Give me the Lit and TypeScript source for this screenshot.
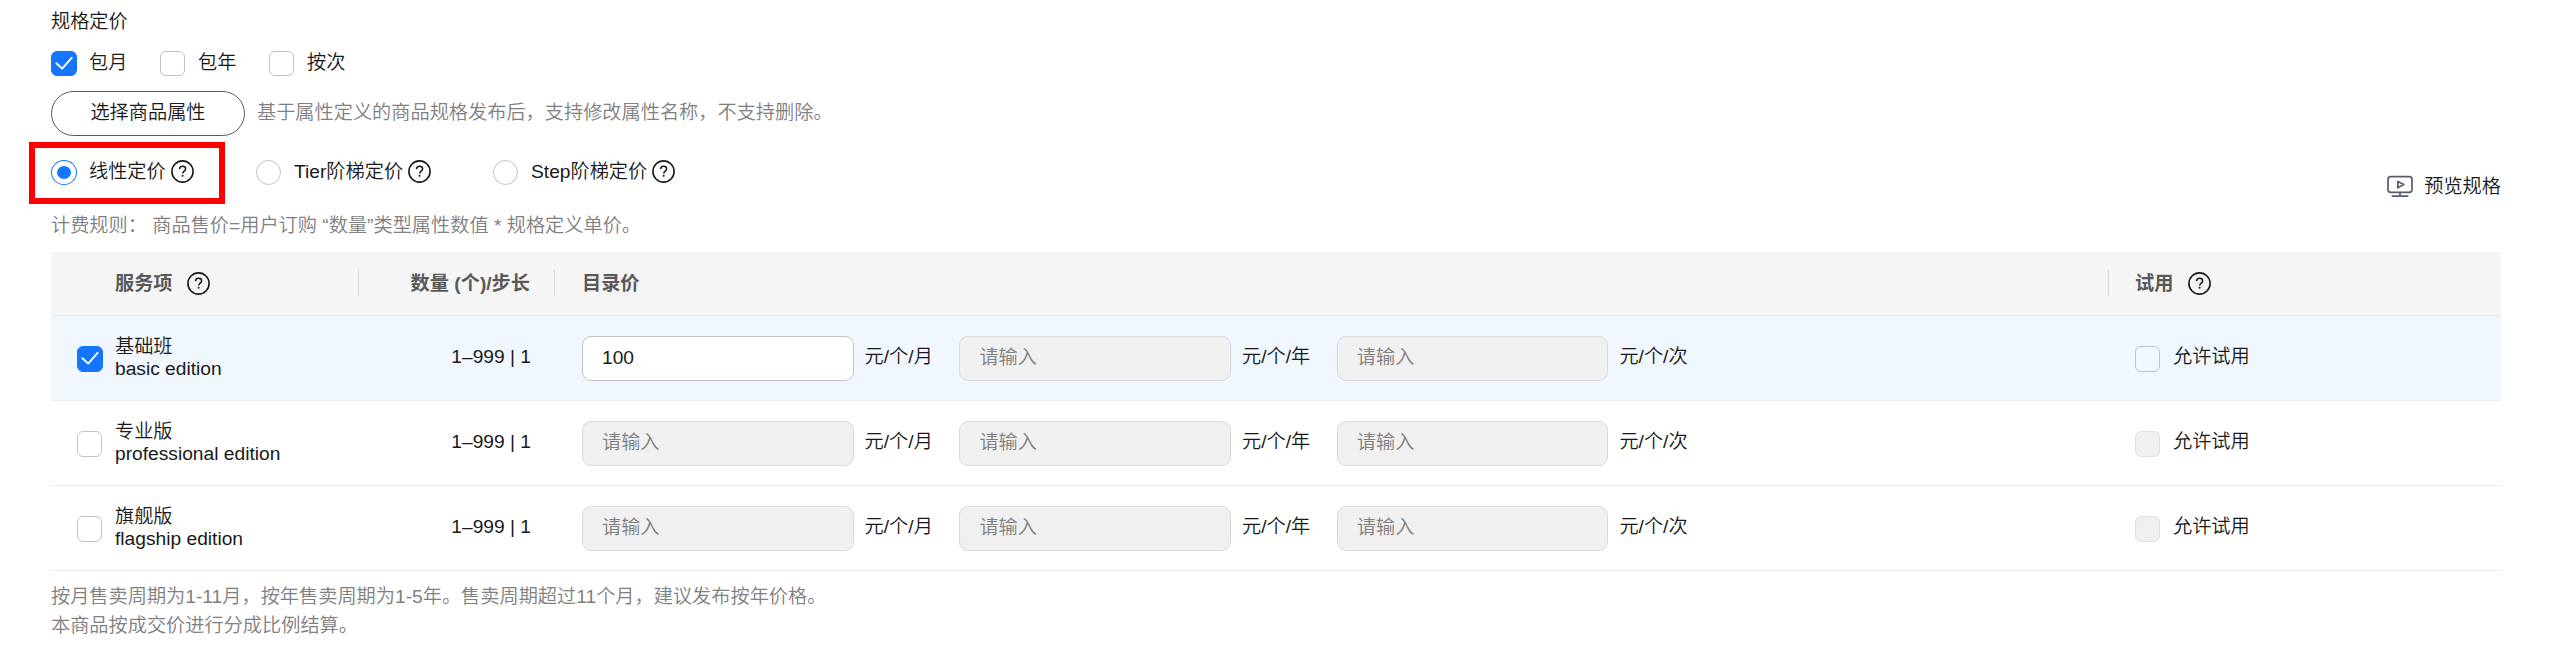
import { LitElement, html, css, nothing } from "lit";
import { customElement, property } from "lit/decorators.js";
import { classMap } from "lit/directives/class-map.js";

@customElement("help-icon")
class HelpIcon extends LitElement {
  static styles = css`
    :host { display: block; flex: none; width: 23px; height: 23px; }
    .glyph { display: block; }
  `;
  render() {
    return html`<svg class="glyph" width="23" height="23" viewBox="0 0 23 23" fill="none">
      <circle cx="11.5" cy="11.5" r="10.6" stroke="#191919" stroke-width="1.6" />
      <path d="M8.5 9.1c.1-1.8 1.3-2.9 3.1-2.9 1.7 0 3 1 3 2.7 0 2.2-2.9 2.3-2.9 4.6" stroke="#191919" stroke-width="1.5" />
      <circle cx="11.6" cy="15.8" r="1" fill="#191919" />
    </svg>`;
  }
}

@customElement("check-box")
class CheckBox extends LitElement {
  @property({ type: Boolean }) checked = false;
  @property({ type: Boolean }) disabled = false;
  static styles = css`
    :host { display: block; flex: none; width: 26px; height: 26px; }
    .box { box-sizing: border-box; width: 25px; height: var(--box-height, 25px); border: 1px solid #c2c2c2; border-radius: 6px; }
    .on { width: 26px; background: #1476ff; border-color: #1476ff; }
    .off { background: #f0f0f0; border-color: #dfdfdf; }
    .tick { display: block; margin: -1px; }
  `;
  render() {
    return html`<div class=${classMap({ box: true, on: this.checked, off: this.disabled })}>
      ${this.checked
        ? html`<svg class="tick" width="26" height="25" viewBox="0 0 26 25" fill="none">
            <path d="M5.4 12.2l5.8 5.4 9.4-10.8" stroke="#fff" stroke-width="1.9" stroke-linecap="round" stroke-linejoin="round" />
          </svg>`
        : nothing}
    </div>`;
  }
}

@customElement("radio-dot")
class RadioDot extends LitElement {
  @property({ type: Boolean }) checked = false;
  static styles = css`
    :host { display: block; flex: none; width: 26px; height: 25px; }
    .ring { box-sizing: border-box; width: 25px; height: 25px; border: 1px solid #c2c2c2; border-radius: 50%; display: grid; place-items: center; }
    .on { width: 26px; border-color: #1476ff; }
    .dot { width: 14px; height: 13px; border-radius: 50%; background: #1476ff; }
  `;
  render() {
    return html`<div class=${classMap({ ring: true, on: this.checked })}>
      ${this.checked ? html`<span class="dot"></span>` : nothing}
    </div>`;
  }
}

interface Edition { name: string; sub: string; checked: boolean; price: string; }

const EDITIONS: Edition[] = [
  { name: "基础班", sub: "basic edition", checked: true, price: "100" },
  { name: "专业版", sub: "professional edition", checked: false, price: "" },
  { name: "旗舰版", sub: "flagship edition", checked: false, price: "" },
];
const UNITS = ["月", "年", "次"];

@customElement("app-root")
class AppRoot extends LitElement {
  static styles = css`
    :host {
      display: block; box-sizing: border-box; height: 665px; padding: 9px 51px 0; background: #fff;
      font: 350 19.2px/26px "Liberation Sans", "Noto Sans CJK SC", sans-serif; color: #191919; white-space: nowrap;
    }
    .title { height: 26px; }
    .periods { display: flex; margin-top: 16px; height: 26px; }
    .option { display: flex; gap: 12px; }
    .option .label { margin-top: -1px; }
    .periods .option { width: 109px; }
    .attr { display: flex; align-items: center; margin-top: 14px; height: 45px; gap: 12px; }
    .btn { box-sizing: border-box; width: 194px; height: 45px; border: 1px solid #595959; border-radius: 23px; text-align: center; line-height: 42px; }
    .muted { color: #808080; }
    .attr .muted { margin-top: -1px; }
    .mid { display: flex; justify-content: space-between; height: 116px; }
    .models { display: flex; height: 62px; margin: 6px 0 0 -22px; }
    .model { box-sizing: border-box; display: flex; align-items: flex-start; height: 62px; padding-top: 18px; }
    .model .label { margin: -1px 5px 0 12px; }
    .marked { width: 196px; padding: 12px 0 0 16px; border: 6px solid #f00; }
    .tier { width: 237px; margin-left: 31px; }
    .rule { margin-top: 9px; }
    .preview { display: flex; gap: 11px; margin-top: 38px; height: 26px; }
    .screen { display: block; margin-top: 1px; }
    .row { box-sizing: border-box; display: grid; grid-template-columns: 26px 38px 244px 172px 51px 1553px 1fr; height: 85px; border-bottom: 1px solid #ededed; --box-height: 26px; }
    .head { height: 64px; background: #f5f5f5; font-weight: 700; color: #595959; align-items: center; }
    .head .cell { display: flex; align-items: center; height: 26px; margin-top: -1px; }
    .head .text { padding-top: 2px; }
    .service { grid-column: 3; gap: 14px; border-right: 1px solid #d6d6d6; }
    .qtyhead { grid-column: 4 / 6; box-sizing: border-box; padding-right: 24px; margin-right: 27px; justify-content: flex-end; border-right: 1px solid #d6d6d6; }
    .pricehead { grid-column: 6; margin-right: 26px; border-right: 1px solid #d6d6d6; }
    .trialhead { gap: 15px; }
    .active { background: #f0f7ff; }
    .pick { grid-column: 2; padding-top: 30px; }
    .name { padding-top: 20px; line-height: 22px; }
    .qty { text-align: right; padding-top: 28px; }
    .prices { grid-column: 6; display: flex; padding-top: 20px; }
    .price { display: flex; width: 377.4px; gap: 11px; }
    .field { box-sizing: border-box; width: 271.6px; height: 45px; border: 1px solid #dbdbdb; border-radius: 9px; padding-left: 19px; line-height: 42px; background: #f0f0f0; color: #808080; }
    .filled { border-color: #c2c2c2; background: #fff; color: #191919; }
    .unit { line-height: 42px; }
    .trial { display: flex; gap: 12px; padding-top: 30px; }
    .trial .label { margin-top: -2px; }
    .foot { padding-top: 11px; line-height: 29px; }
  `;

  model(label: string, extra: string, checked = false) {
    return html`<div class="model ${extra}">
      <radio-dot ?checked=${checked}></radio-dot><span class="label">${label}</span><help-icon></help-icon>
    </div>`;
  }

  row(e: Edition) {
    return html`<div class=${classMap({ row: true, active: e.checked })}>
      <check-box class="pick" ?checked=${e.checked}></check-box>
      <div class="name"><div>${e.name}</div><div>${e.sub}</div></div>
      <div class="qty">1–999 | 1</div>
      <div class="prices">
        ${UNITS.map((u, i) => {
          const filled = i === 0 && e.price !== "";
          return html`<div class="price">
            <div class=${classMap({ field: true, filled })}>${filled ? e.price : "请输入"}</div>
            <span class="unit">元/个/${u}</span>
          </div>`;
        })}
      </div>
      <div class="trial"><check-box ?disabled=${!e.checked}></check-box><span class="label">允许试用</span></div>
    </div>`;
  }

  render() {
    return html`
      <div class="title">规格定价</div>
      <div class="periods">
        ${["包月", "包年", "按次"].map((t, i) => html`<div class="option">
          <check-box ?checked=${i === 0}></check-box><span class="label">${t}</span>
        </div>`)}
      </div>
      <div class="attr">
        <div class="btn">选择商品属性</div>
        <span class="muted">基于属性定义的商品规格发布后，支持修改属性名称，不支持删除。</span>
      </div>
      <div class="mid">
        <div>
          <div class="models">
            ${this.model("线性定价", "marked", true)}
            ${this.model("Tier阶梯定价", "tier")}
            ${this.model("Step阶梯定价", "")}
          </div>
          <div class="rule muted">计费规则： 商品售价=用户订购 “数量”类型属性数值 * 规格定义单价。</div>
        </div>
        <div class="preview">
          <svg class="screen" width="26" height="24" viewBox="0 0 26 24" fill="none" stroke="#575d6c" stroke-width="1.7" stroke-linecap="round" stroke-linejoin="round">
            <rect x="1" y="1.6" width="24" height="15.8" rx="2.8" />
            <path d="M10.8 6.4v6.4l6-3.2z" />
            <path d="M13 17.6v3M5.4 21.2h15.4" />
          </svg>
          <span>预览规格</span>
        </div>
      </div>
      <div class="row head">
        <div class="cell service"><span class="text">服务项</span><help-icon></help-icon></div>
        <div class="cell qtyhead"><span class="text">数量 (个)/步长</span></div>
        <div class="cell pricehead"><span class="text">目录价</span></div>
        <div class="cell trialhead"><span class="text">试用</span><help-icon></help-icon></div>
      </div>
      ${EDITIONS.map((e) => this.row(e))}
      <div class="foot muted">
        <div>按月售卖周期为1-11月，按年售卖周期为1-5年。售卖周期超过11个月，建议发布按年价格。</div>
        <div>本商品按成交价进行分成比例结算。</div>
      </div>`;
  }
}
